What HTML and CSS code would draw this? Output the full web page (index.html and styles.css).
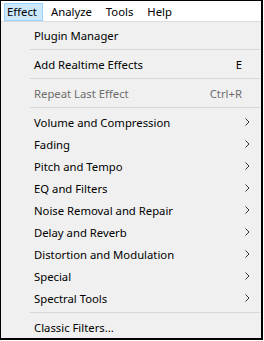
FILE: index.html
```html
<!DOCTYPE html>
<html>
<head>
<meta charset="utf-8">
<link rel="stylesheet" href="styles.css">
</head>
<body>
<div class="frame">
  <div class="menubar">
    <span class="mb-item active">Effect</span>
    <span class="mb-item">Analyze</span>
    <span class="mb-item">Tools</span>
    <span class="mb-item">Help</span>
  </div>
  <div class="menu">
    <div class="item"><span class="label">Plugin Manager</span></div>
    <div class="sep"></div>
    <div class="item"><span class="label">Add Realtime Effects</span><span class="key">E</span></div>
    <div class="sep"></div>
    <div class="item disabled"><span class="label">Repeat Last Effect</span><span class="key">Ctrl+R</span></div>
    <div class="sep"></div>
    <div class="item sub"><span class="label">Volume and Compression</span><svg class="chev" width="5" height="8" viewBox="0 0 5 8"><path d="M0.5 0.5 L4 4 L0.5 7.5" fill="none" stroke="#333" stroke-width="1"/></svg></div>
    <div class="item sub"><span class="label">Fading</span><svg class="chev" width="5" height="8" viewBox="0 0 5 8"><path d="M0.5 0.5 L4 4 L0.5 7.5" fill="none" stroke="#333" stroke-width="1"/></svg></div>
    <div class="item sub"><span class="label">Pitch and Tempo</span><svg class="chev" width="5" height="8" viewBox="0 0 5 8"><path d="M0.5 0.5 L4 4 L0.5 7.5" fill="none" stroke="#333" stroke-width="1"/></svg></div>
    <div class="item sub"><span class="label">EQ and Filters</span><svg class="chev" width="5" height="8" viewBox="0 0 5 8"><path d="M0.5 0.5 L4 4 L0.5 7.5" fill="none" stroke="#333" stroke-width="1"/></svg></div>
    <div class="item sub"><span class="label">Noise Removal and Repair</span><svg class="chev" width="5" height="8" viewBox="0 0 5 8"><path d="M0.5 0.5 L4 4 L0.5 7.5" fill="none" stroke="#333" stroke-width="1"/></svg></div>
    <div class="item sub"><span class="label">Delay and Reverb</span><svg class="chev" width="5" height="8" viewBox="0 0 5 8"><path d="M0.5 0.5 L4 4 L0.5 7.5" fill="none" stroke="#333" stroke-width="1"/></svg></div>
    <div class="item sub"><span class="label">Distortion and Modulation</span><svg class="chev" width="5" height="8" viewBox="0 0 5 8"><path d="M0.5 0.5 L4 4 L0.5 7.5" fill="none" stroke="#333" stroke-width="1"/></svg></div>
    <div class="item sub"><span class="label">Special</span><svg class="chev" width="5" height="8" viewBox="0 0 5 8"><path d="M0.5 0.5 L4 4 L0.5 7.5" fill="none" stroke="#333" stroke-width="1"/></svg></div>
    <div class="item sub"><span class="label">Spectral Tools</span><svg class="chev" width="5" height="8" viewBox="0 0 5 8"><path d="M0.5 0.5 L4 4 L0.5 7.5" fill="none" stroke="#333" stroke-width="1"/></svg></div>
    <div class="sep"></div>
    <div class="item"><span class="label">Classic Filters...</span></div>
  </div>
</div>
</body>
</html>
```

FILE: styles.css
```css
html, body {
  margin: 0;
  padding: 0;
  background: #ffffff;
}
body {
  font-family: "Noto Sans", "Open Sans", sans-serif;
  font-size: 11.3px;
  color: #000;
}
.frame {
  box-sizing: border-box;
  width: 263px;
  height: 340px;
  border: 1px solid #000;
  border-right-width: 2px;
  border-bottom-width: 2px;
  display: flex;
  flex-direction: column;
  background: #f0f0f0;
}
.menubar {
  height: 21px;
  background: #fff;
  border-bottom: 1px solid #dadada;
  display: flex;
  align-items: flex-end;
  padding-left: 3px;
  gap: 5px;
}
.mb-item {
  box-sizing: border-box;
  height: 18px;
  line-height: 16px;
  padding: 0 5px 0 2px;
  border: 1px solid transparent;
}
.mb-item.active {
  background: #cce8ff;
  border-color: #99d1ff;
}
.menu {
  padding-top: 2px;
  display: flex;
  flex-direction: column;
}
.item {
  height: 22px;
  display: flex;
  align-items: center;
  padding-left: 33px;
  padding-right: 19px;
}
.item .label {
  flex: 1;
}
.item .key {
  text-align: right;
}
.item.disabled {
  color: #6d6d6d;
}
.item.sub {
  padding-right: 11px;
}
.chev {
  display: block;
}
.sep {
  height: 1px;
  background: #d7d7d7;
  margin: 3px 1px 3px 29px;
}
```
